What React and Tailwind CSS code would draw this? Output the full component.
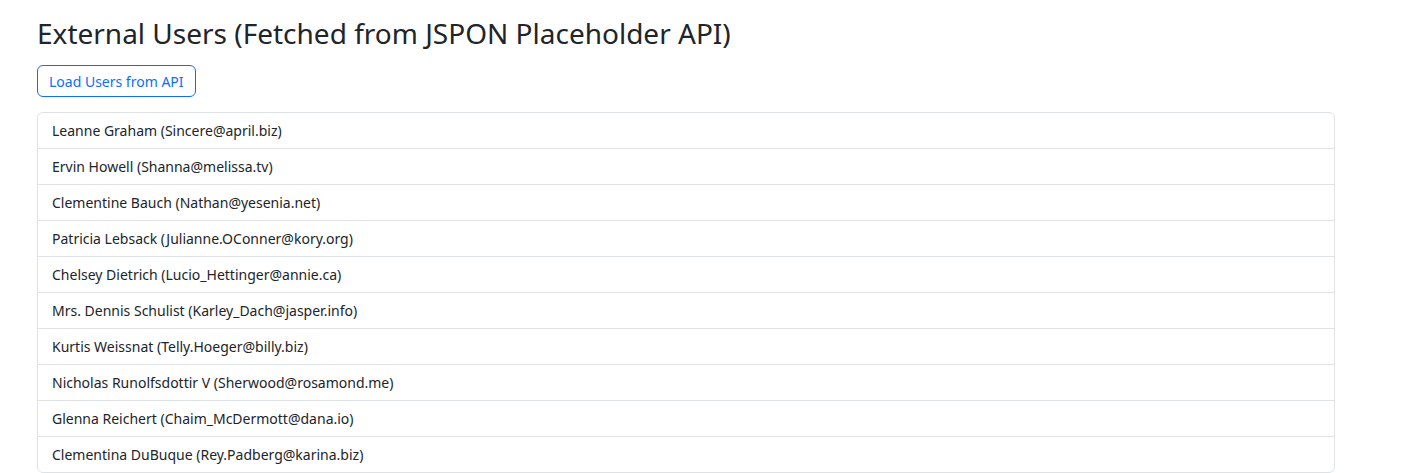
const users = [
  ["Leanne Graham", "Sincere@april.biz"],
  ["Ervin Howell", "Shanna@melissa.tv"],
  ["Clementine Bauch", "Nathan@yesenia.net"],
  ["Patricia Lebsack", "Julianne.OConner@kory.org"],
  ["Chelsey Dietrich", "Lucio_Hettinger@annie.ca"],
  ["Mrs. Dennis Schulist", "Karley_Dach@jasper.info"],
  ["Kurtis Weissnat", "Telly.Hoeger@billy.biz"],
  ["Nicholas Runolfsdottir V", "Sherwood@rosamond.me"],
  ["Glenna Reichert", "Chaim_McDermott@dana.io"],
  ["Clementina DuBuque", "Rey.Padberg@karina.biz"],
];

export default function App() {
  return (
    <div className="bg-white text-[#212529] min-h-[473px]" style={{ fontFamily: '"Noto Sans", sans-serif' }}>
      <div className="ml-[37px] w-[1298px] pt-[17px]">
        <h2 className="text-[28px] leading-[1.2] font-normal mb-[14px]">
          External Users (Fetched from JSPON Placeholder API)
        </h2>
        <button className="h-[32px] px-[11px] pt-[1px] border border-[#0d6efd] text-[#0d6efd] rounded-[6px] text-[14px] leading-[21px] bg-white">
          Load Users from API
        </button>
        <ul className="mt-[15px] border border-[#dee2e6] rounded-[6px]">
          {users.map(([n, e], i) => (
            <li
              key={i}
              className={`h-[35px] flex items-center pl-[14px] text-[14px] ${i > 0 ? "border-t border-[#dee2e6] h-[36px]" : ""}`}
            >
              {n} ({e})
            </li>
          ))}
        </ul>
      </div>
    </div>
  );
}
